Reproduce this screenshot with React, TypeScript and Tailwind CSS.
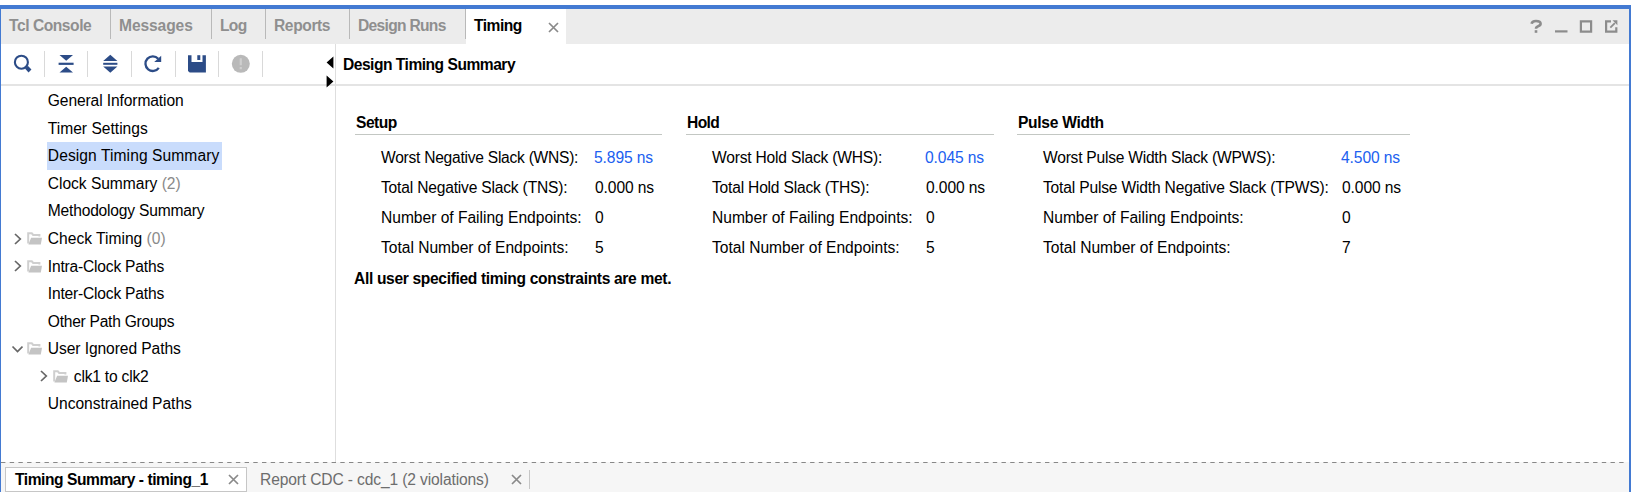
import type { ReactNode } from "react";

function CloseIcon() {
  return (
    <svg className="h-[11px] w-[11px] shrink-0" viewBox="0 0 11 11" fill="none" stroke="#8a8a8a" strokeWidth="1.7">
      <path d="M1 1 10 10M10 1 1 10" />
    </svg>
  );
}

function Chevron({ open = false }: { open?: boolean }) {
  return (
    <svg className="h-3 w-3 shrink-0" viewBox="0 0 12 12" fill="none" stroke="#666" strokeWidth="1.7">
      {open ? <path d="M1.5 3.5 6.5 8.5 11.5 3.5" /> : <path d="M4 1 9.3 6 4 11" />}
    </svg>
  );
}

function FolderIcon() {
  return (
    <svg className="h-[13px] w-[15px] shrink-0" viewBox="0 0 15 13">
      <path d="M1.2 11.5V1.3H4.8L6.2 3H12.4V4.6" fill="none" stroke="#cfcfcf" strokeWidth="2" />
      <path d="M4.1 5.8H15L13.8 12.6H1.4Z" fill="#c4c4c4" />
    </svg>
  );
}

const tabs = [
  { label: "Tcl Console", box: "w-[110px] tracking-[-0.45px]" },
  { label: "Messages", box: "w-[101px] tracking-[-0.1px]" },
  { label: "Log", box: "w-[54px] tracking-[-0.7px]" },
  { label: "Reports", box: "w-[84px] tracking-[-0.4px]" },
  { label: "Design Runs", box: "w-[116px] tracking-[-0.7px]" },
];

function TabBar() {
  return (
    <div className="flex h-[35px] shrink-0 bg-[#ececec] font-bold text-[#8f8f8f]">
      {tabs.map((t) => (
        <div key={t.label} className={`h-[30px] shrink-0 border-r border-[#b9b9b9] pl-2 pt-[5px] ${t.box}`}>
          {t.label}
        </div>
      ))}
      <div className="flex w-[100px] shrink-0 bg-white pl-2 pt-[5px] text-black">
        <span className="w-[74px] tracking-[-0.5px]">Timing</span>
        <span className="pt-[8px] leading-none"><CloseIcon /></span>
      </div>
      <div className="ml-auto flex pr-[10px] pt-[10px]">
        <svg className="h-4 w-[90px]" viewBox="0 0 90 16" fill="none" stroke="#8c8c8c" strokeWidth="2.2">
          <path d="M2.6 4.8Q3 2 7 2Q11.6 2 11.6 4.8Q11.6 6.4 9.2 7.2Q7 8 7 9.8" strokeWidth="2.6" />
          <path d="M7 11.2V13.8" strokeWidth="2.6" />
          <path d="M26 12.4H38.5" />
          <path d="M51.9 2.3H62.1V12.7H51.9Z" />
          <path d="M82 2.3H77.1V12.7H87.3V8.2" />
          <path d="M81.3 8.7 85.8 4.2" strokeWidth="1.8" />
          <path d="M83.5 1.2H88.4V6.2Z" fill="#8c8c8c" stroke="none" />
        </svg>
      </div>
    </div>
  );
}

const NAVY = "#2c4c87";

function Tool({ children, first = false }: { children: ReactNode; first?: boolean }) {
  return (
    <div className={`flex h-[26px] shrink-0 items-center justify-center border-r border-[#d9d9d9] ${first ? "w-[43.5px] pl-px" : "w-[43.7px]"}`}>
      <svg className="h-5 w-5" viewBox="0 0 20 20">
        {children}
      </svg>
    </div>
  );
}

function Toolbar() {
  return (
    <div className="flex h-[42px] shrink-0 border-b-2 border-[#e4e4e4] pt-[7px]">
      <Tool first>
        <circle cx="8.4" cy="8.2" r="6.5" fill="none" stroke={NAVY} strokeWidth="2.1" />
        <path d="M13.4 13.2 17 17" stroke={NAVY} strokeWidth="4" />
      </Tool>
      <Tool>
        <path d="M3.5 1H17L10.2 6.8ZM3.5 18.6H17L10.2 12.8Z" fill={NAVY} />
        <path d="M2.6 9.8H17.6" stroke={NAVY} strokeWidth="2.2" />
      </Tool>
      <Tool>
        <path d="M3.2 7 10.3 0.8 17.4 7ZM3.2 12.6 10.3 18.8 17.4 12.6Z" fill={NAVY} />
        <path d="M3.2 9.8H17.4" stroke={NAVY} strokeWidth="2" />
      </Tool>
      <Tool>
        <path d="M15.2 4.8A7.3 7.3 0 1 0 15.8 13.8" fill="none" stroke={NAVY} strokeWidth="2.3" />
        <path d="M18.2 1.8V8H11.2Z" fill={NAVY} />
      </Tool>
      <Tool>
        <path d="M1 1.2H4.5V8H15.5V1.2H18.9V18.6H2.7L1 17Z" fill={NAVY} />
        <path d="M10.3 1.2H13.3V6H10.3Z" fill={NAVY} />
      </Tool>
      <Tool>
        <circle cx="9.8" cy="9.8" r="9" fill="#b9b9b9" />
        <path d="M9.8 4.3V11.2M9.8 13V15.3" stroke="#cfcfcf" strokeWidth="2.2" />
      </Tool>
      <svg className="relative z-10 ml-auto mt-[5px] h-8 w-[10px] shrink-0" viewBox="0 0 10 32">
        <path d="M8.4 0.5V12.5L1.6 6.5ZM1.6 19.5V31.5L8.4 25.5Z" fill="#000" />
      </svg>
    </div>
  );
}

type Node = {
  label: string;
  track: string;
  count?: string;
  kind?: "closed" | "open";
  nested?: boolean;
  selected?: boolean;
};

const nodes: Node[] = [
  { label: "General Information", track: "tracking-[-0.11px]" },
  { label: "Timer Settings", track: "tracking-[0px]" },
  { label: "Design Timing Summary", track: "tracking-[0.08px]", selected: true },
  { label: "Clock Summary", track: "tracking-[-0.04px]", count: "(2)" },
  { label: "Methodology Summary", track: "tracking-[-0.2px]" },
  { label: "Check Timing", track: "tracking-[0px]", count: "(0)", kind: "closed" },
  { label: "Intra-Clock Paths", track: "tracking-[-0.2px]", kind: "closed" },
  { label: "Inter-Clock Paths", track: "tracking-[-0.2px]" },
  { label: "Other Path Groups", track: "tracking-[-0.26px]" },
  { label: "User Ignored Paths", track: "tracking-[-0.08px]", kind: "open" },
  { label: "clk1 to clk2", track: "tracking-[-0.2px]", kind: "closed", nested: true },
  { label: "Unconstrained Paths", track: "tracking-[-0.04px]" },
];

function Sidebar() {
  return (
    <div className="flex w-[335px] shrink-0 flex-col border-r border-[#dedede]">
      <Toolbar />
      <div className="pt-px">
        {nodes.map((n) => (
          <div key={n.label} className={`flex h-[27.55px] items-center ${n.nested ? "pl-[36px]" : "pl-[10px]"}`}>
            <div className="flex w-[36px] shrink-0 items-center gap-1">
              {n.kind && (
                <>
                  <Chevron open={n.kind === "open"} />
                  <FolderIcon />
                </>
              )}
            </div>
            <div className={`flex h-full items-center whitespace-pre pl-[0.8px] pt-px ${n.track} ${n.selected ? "w-[175px] bg-[#c9dcfc]" : ""}`}>
              {n.label}
              {n.count && <span className="text-[#8a8a8a]"> {n.count}</span>}
            </div>
          </div>
        ))}
      </div>
    </div>
  );
}

const failing = ["Number of Failing Endpoints:", "tracking-[-0.02px]"];
const total = ["Total Number of Endpoints:", "tracking-[-0.02px]"];

const groups = [
  {
    title: "Setup",
    box: "w-[307px] mr-6",
    heading: "tracking-[-0.5px]",
    label: "w-[214px]",
    rows: [
      ["Worst Negative Slack (WNS):", "tracking-[-0.26px]", "5.895 ns"],
      ["Total Negative Slack (TNS):", "tracking-[-0.19px]", "0.000 ns"],
      [...failing, "0"],
      [...total, "5"],
    ],
  },
  {
    title: "Hold",
    box: "w-[308px] mr-[23px]",
    heading: "tracking-[-0.6px]",
    label: "w-[214px]",
    rows: [
      ["Worst Hold Slack (WHS):", "tracking-[-0.2px]", "0.045 ns"],
      ["Total Hold Slack (THS):", "tracking-[-0.2px]", "0.000 ns"],
      [...failing, "0"],
      [...total, "5"],
    ],
  },
  {
    title: "Pulse Width",
    box: "w-[393px]",
    heading: "tracking-[-0.3px]",
    label: "w-[299px]",
    rows: [
      ["Worst Pulse Width Slack (WPWS):", "tracking-[-0.24px]", "4.500 ns"],
      ["Total Pulse Width Negative Slack (TPWS):", "tracking-[-0.18px]", "0.000 ns"],
      [...failing, "0"],
      [...total, "7"],
    ],
  },
];

function Report() {
  return (
    <div className="flex min-w-0 grow flex-col">
      <div className="h-[42px] shrink-0 border-b-2 border-[#e4e4e4] pl-[7px] pt-[9px] font-bold tracking-[-0.5px]">
        Design Timing Summary
      </div>
      <div className="flex pl-[19px] pt-6">
        {groups.map((g) => (
          <div key={g.title} className={`shrink-0 ${g.box}`}>
            <div className={`h-[25px] border-b border-[#c3c7c3] pl-px pt-px font-bold ${g.heading}`}>{g.title}</div>
            <div className="pl-[26px] pt-2">
              {g.rows.map(([label, track, value], i) => (
                <div key={label} className="flex h-[30px] items-center whitespace-nowrap">
                  <span className={`shrink-0 ${g.label} ${track}`}>{label}</span>
                  <span className={`tracking-[-0.1px] ${i === 0 ? "-ml-px text-[#2060f0]" : ""}`}>{value}</span>
                </div>
              ))}
            </div>
          </div>
        ))}
      </div>
      <div className="pl-[18px] pt-[4px] font-bold tracking-[-0.34px]">All user specified timing constraints are met.</div>
    </div>
  );
}

function BottomTabs() {
  return (
    <div className="flex h-[30px] shrink-0 flex-col bg-[#f6f6f6]">
      <svg className="h-px w-full shrink-0">
        <path d="M0 0.5H1625" stroke="#888" strokeWidth="1" strokeDasharray="4.4 4.3" />
      </svg>
      <div className="flex pl-1 pt-1">
        <div className="flex h-[25px] w-[242px] shrink-0 items-center border border-[#c6c6c6] bg-white pl-[9px] font-bold whitespace-nowrap">
          <span className="w-[213px] shrink-0 pt-px tracking-[-0.45px]">Timing Summary - timing_1</span>
          <CloseIcon />
        </div>
        <div className="flex h-[25px] items-center whitespace-nowrap pl-[13px] text-[#6d6d6d]">
          <span className="w-[251px] shrink-0 pt-px tracking-[-0.13px]">Report CDC - cdc_1 (2 violations)</span>
          <CloseIcon />
          <div className="ml-[7px] h-[19px] w-px bg-[#c6c6c6]" />
        </div>
      </div>
    </div>
  );
}

export default function App() {
  return (
    <div className="flex h-[492px] w-[1631px] flex-col overflow-hidden bg-white pt-[5px] font-['Liberation_Sans',Arial,sans-serif] text-[15.6px] leading-6 text-black">
      <div className="flex grow flex-col border-l border-r-2 border-t-4 border-[#437ad2]">
        <TabBar />
        <div className="flex min-h-0 grow">
          <Sidebar />
          <Report />
        </div>
        <BottomTabs />
      </div>
    </div>
  );
}
